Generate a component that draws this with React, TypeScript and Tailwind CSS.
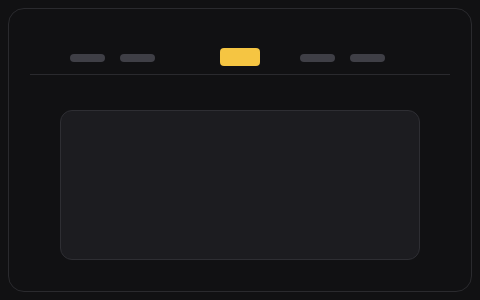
import React from 'react';

export default function App() {
  return (
    <div className="w-[480px] h-[300px] bg-[#111113] p-2">
      <div className="h-full rounded-[16px] border border-[#2a2a2e] bg-[#111113] px-[21px] pt-[39px]">
        <div className="flex items-start h-[18px]">
          <div className="ml-[40px] mt-[6px] w-[35px] h-[8px] rounded-full bg-[#3f3f46]" />
          <div className="ml-[15px] mt-[6px] w-[35px] h-[8px] rounded-full bg-[#3f3f46]" />
          <div className="ml-[65px] w-[40px] h-[18px] rounded-[4px] bg-[#f5c542]" />
          <div className="ml-[40px] mt-[6px] w-[35px] h-[8px] rounded-full bg-[#3f3f46]" />
          <div className="ml-[15px] mt-[6px] w-[35px] h-[8px] rounded-full bg-[#3f3f46]" />
        </div>
        <div className="mt-[8px] h-px bg-[#2a2a2e]" />
        <div className="mt-[35px] mx-auto w-[360px] h-[150px] rounded-[12px] border border-[#2e2e33] bg-[#1c1c20]" />
      </div>
    </div>
  );
}
